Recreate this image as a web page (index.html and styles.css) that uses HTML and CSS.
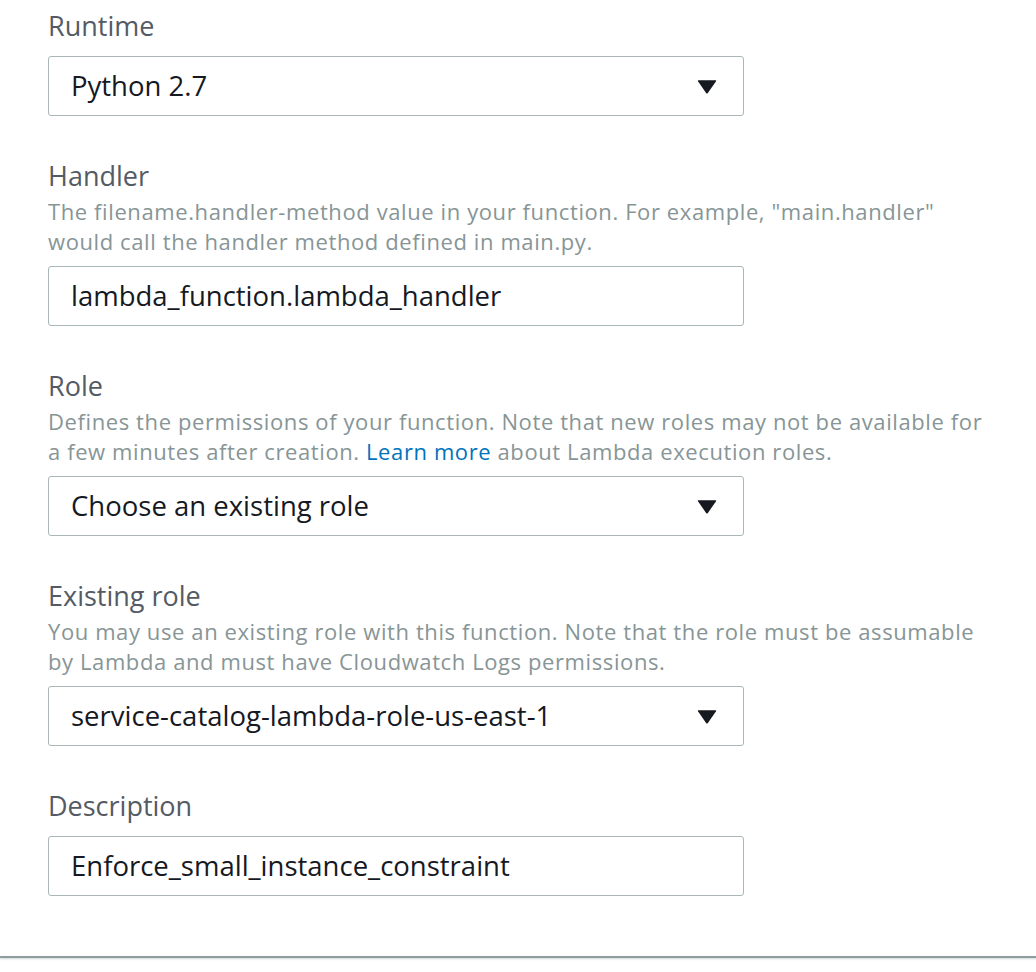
FILE: index.html
```html
<!DOCTYPE html>
<html lang="en">
<head>
<meta charset="utf-8">
<title>Lambda function settings</title>
<link rel="stylesheet" href="styles.css">
</head>
<body>
<div class="form">
  <div class="field">
    <div class="label">Runtime</div>
    <div class="control select">
      <span class="value">Python 2.7</span>
      <svg class="caret" width="20" height="15" viewBox="0 0 20 15"><path d="M1.5 1.2 L18.5 1.2 Q19.6 1.2 19 2.2 L10.9 14 Q10 15.2 9.1 14 L1 2.2 Q0.4 1.2 1.5 1.2 Z" fill="#16191f"/></svg>
    </div>
  </div>
  <div class="field">
    <div class="label">Handler</div>
    <div class="hint">The filename.handler-method value in your function. For example, "main.handler" would call the handler method defined in main.py.</div>
    <div class="control input"><span class="value">lambda_function.lambda_handler</span></div>
  </div>
  <div class="field">
    <div class="label">Role</div>
    <div class="hint">Defines the permissions of your function. Note that new roles may not be available for a few minutes after creation. <a class="link" href="#">Learn more</a> about Lambda execution roles.</div>
    <div class="control select">
      <span class="value">Choose an existing role</span>
      <svg class="caret" width="20" height="15" viewBox="0 0 20 15"><path d="M1.5 1.2 L18.5 1.2 Q19.6 1.2 19 2.2 L10.9 14 Q10 15.2 9.1 14 L1 2.2 Q0.4 1.2 1.5 1.2 Z" fill="#16191f"/></svg>
    </div>
  </div>
  <div class="field">
    <div class="label">Existing role</div>
    <div class="hint">You may use an existing role with this function. Note that the role must be assumable by Lambda and must have Cloudwatch Logs permissions.</div>
    <div class="control select">
      <span class="value">service-catalog-lambda-role-us-east-1</span>
      <svg class="caret" width="20" height="15" viewBox="0 0 20 15"><path d="M1.5 1.2 L18.5 1.2 Q19.6 1.2 19 2.2 L10.9 14 Q10 15.2 9.1 14 L1 2.2 Q0.4 1.2 1.5 1.2 Z" fill="#16191f"/></svg>
    </div>
  </div>
  <div class="field">
    <div class="label">Description</div>
    <div class="control input"><span class="value">Enforce_small_instance_constraint</span></div>
  </div>
</div>
<div class="divider"></div>
</body>
</html>
```
FILE: styles.css
```css
html, body {
  margin: 0;
  padding: 0;
  background: #ffffff;
}
body {
  font-family: "Open Sans", "Liberation Sans", sans-serif;
  width: 1036px;
  height: 972px;
  overflow: hidden;
}
.form {
  display: flex;
  flex-direction: column;
  gap: 45px;
  padding: 11px 0 60px 48px;
}
.field {
  display: flex;
  flex-direction: column;
  width: 940px;
}
.label {
  font-size: 27px;
  line-height: 30px;
  color: #545b64;
}
.hint {
  font-size: 22px;
  line-height: 30px;
  letter-spacing: 0.6px;
  color: #879596;
  margin: 5px 0 -5px;
}
.link {
  color: #0073bb;
  text-decoration: none;
}
.control {
  box-sizing: border-box;
  width: 696px;
  height: 60px;
  margin-top: 15px;
  border: 1px solid #aab7b8;
  border-radius: 3px;
  display: flex;
  align-items: center;
  justify-content: space-between;
  padding: 0 26px 0 22px;
  color: #16191f;
  font-size: 27.5px;
}
.value {
  line-height: 30px;
}
.caret {
  display: block;
  flex: none;
}
.divider {
  height: 2px;
  background: #8f9c9d;
  box-shadow: 0 1px 2px rgba(170, 183, 184, 0.6);
}
```
